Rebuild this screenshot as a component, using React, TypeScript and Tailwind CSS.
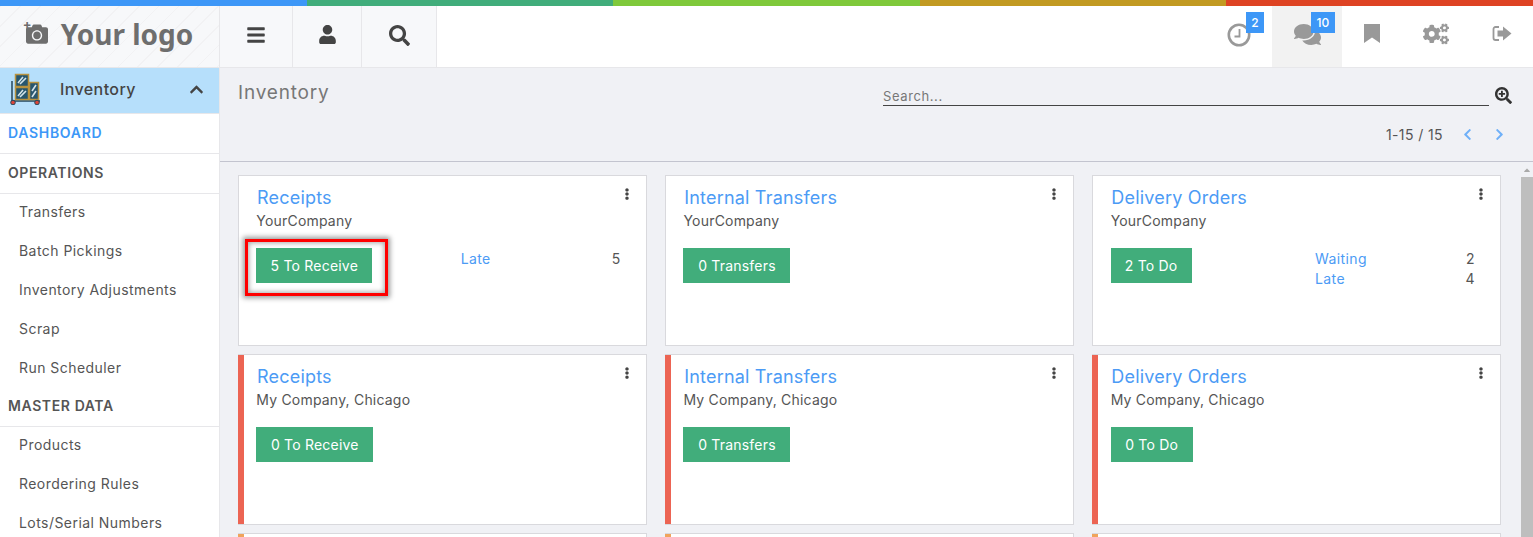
import React from "react";
import { FaBars, FaUser, FaSearch, FaComments, FaCogs, FaSearchPlus, FaChevronUp, FaChevronLeft, FaChevronRight, FaEllipsisV, FaCamera, FaCaretUp } from "react-icons/fa";

const operations = ["Transfers", "Batch Pickings", "Inventory Adjustments", "Scrap", "Run Scheduler"];
const masterData = ["Products", "Reordering Rules", "Lots/Serial Numbers"];

type Stat = { label: string; value: number };
type CardData = { title: string; company: string; action: string; width: string; accent?: string; stats?: Stat[] };

const cards: CardData[] = [
  { title: "Receipts", company: "YourCompany", action: "5 To Receive", width: "w-[116px]", stats: [{ label: "Late", value: 5 }] },
  { title: "Internal Transfers", company: "YourCompany", action: "0 Transfers", width: "w-[107px]" },
  { title: "Delivery Orders", company: "YourCompany", action: "2 To Do", width: "w-[81px]", stats: [{ label: "Waiting", value: 2 }, { label: "Late", value: 4 }] },
  { title: "Receipts", company: "My Company, Chicago", action: "0 To Receive", width: "w-[117px]", accent: "bg-[#ec6453]" },
  { title: "Internal Transfers", company: "My Company, Chicago", action: "0 Transfers", width: "w-[107px]", accent: "bg-[#ec6453]" },
  { title: "Delivery Orders", company: "My Company, Chicago", action: "0 To Do", width: "w-[82px]", accent: "bg-[#ec6453]" },
];

function InventoryIcon() {
  return (
    <svg width="33" height="32" viewBox="0 0 33 32">
      <path d="M3 8 L3 28 L31 28" fill="none" stroke="#24475c" strokeWidth="1.5" />
      <rect x="6.5" y="1.5" width="13" height="12" fill="#27566e" stroke="#b8923f" strokeWidth="1.5" />
      <rect x="6.5" y="14.5" width="13" height="12" fill="#27566e" stroke="#b8923f" strokeWidth="1.5" />
      <rect x="20.5" y="9.5" width="9" height="17" fill="#27566e" stroke="#b8923f" strokeWidth="1.5" />
      <path d="M9 10 L14 4 M11 11 L17 5 M9 23 L14 17 M11 24 L17 18 M23 18 L27 12 M23 24 L27 18" stroke="#d5e4ea" strokeWidth="1.6" />
      <circle cx="4" cy="29.5" r="2.3" fill="#d8453a" stroke="#24475c" />
      <circle cx="28" cy="29.5" r="2.3" fill="#d8453a" stroke="#24475c" />
    </svg>
  );
}

function Card({ card }: { card: CardData }) {
  return (
    <div className="relative h-[171px] border border-[#d9d9dd] bg-white">
      {card.accent && <div className={`absolute -left-px top-0 bottom-0 w-[6px] ${card.accent}`} />}
      <div className="flex h-[34px] items-start justify-between pl-[18px] pr-[13px] pt-[10px]">
        <div className="text-[18px] leading-[23px] text-[#4c9bf5]">{card.title}</div>
        <FaEllipsisV className="mt-[2px] text-[12px] text-[#444]" />
      </div>
      <div className="pl-[17.3px] text-[14px] leading-[22px] text-[#555]">{card.company}</div>
      <div className="flex items-start pl-[17.3px] pr-[25px] pt-[16px]">
        <div className={`flex h-[35px] items-center justify-center bg-[#41ad7b] text-[14px] text-white ${card.width}`}>{card.action}</div>
        {card.stats && (
          <div className="ml-auto mt-[1px] flex w-[160px] flex-col text-[14px] leading-[20px] tracking-[0.4px]">
            {card.stats.map((s) => (
              <div key={s.label} className="flex justify-between">
                <span className="text-[#4c9bf5]">{s.label}</span>
                <span className="text-[#555]">{s.value}</span>
              </div>
            ))}
          </div>
        )}
      </div>
    </div>
  );
}

export default function App() {
  return (
    <div className="flex h-[537px] flex-col overflow-hidden bg-white font-['Inter','Open_Sans',sans-serif] tracking-[0.2px] text-[#555]">
      <div className="flex h-[6px] shrink-0">
        <div className="flex-1 bg-[#3d97f7]" />
        <div className="flex-1 bg-[#41ad7b]" />
        <div className="flex-1 bg-[#7fc93b]" />
        <div className="flex-1 bg-[#c29a22]" />
        <div className="flex-1 bg-[#de4323]" />
      </div>

      <header className="flex h-[62px] shrink-0 border-b border-[#e7e7ea] bg-white">
        <div className="flex w-[220px] items-center justify-center gap-[13px] border-r border-[#e7e7ea] bg-[#f7f8fa] bg-[repeating-linear-gradient(135deg,#f2f2f4_0,#f2f2f4_1px,#f7f8fa_1px,#f7f8fa_14px)] pb-[5px]">
          <div className="relative">
            <FaCamera className="text-[22px] text-[#6e6e6e]" />
            <span className="absolute -left-[3px] -top-[8px] text-[13px] font-bold text-[#6e6e6e]">+</span>
          </div>
          <span className="font-['Noto_Sans',sans-serif] text-[28px] font-bold tracking-normal text-[#6e6e6e]">Your logo</span>
        </div>
        <div className="flex w-[73px] items-center justify-center border-r border-[#e7e7ea] bg-[#f7f8fa] pb-[4px]"><FaBars className="text-[20px] text-[#444]" /></div>
        <div className="flex w-[69px] items-center justify-center border-r border-[#e7e7ea] bg-[#f7f8fa] pb-[4px]"><FaUser className="text-[19px] text-[#444]" /></div>
        <div className="flex w-[75px] items-center justify-center border-r border-[#e7e7ea] bg-[#f7f8fa] pb-[3px]"><FaSearch className="text-[21px] text-[#444]" /></div>
        <div className="ml-auto flex h-full">
          <div className="relative flex w-[66px] items-center justify-center">
            <svg width="24" height="24" viewBox="0 0 24 24" className="mt-[-4px]">
              <circle cx="12" cy="12" r="10.2" fill="none" stroke="#999" strokeWidth="2.6" />
              <path d="M12.5 6 V13.5 H7.5" fill="none" stroke="#999" strokeWidth="1.8" />
            </svg>
            <span className="absolute left-[40px] top-[6px] flex h-[21px] w-[18px] items-center justify-center bg-[#3d97f7] text-[12px] font-medium text-white">2</span>
          </div>
          <div className="relative flex w-[70px] items-center justify-center bg-[#f2f2f2]">
            <FaComments className="mt-[-4px] text-[27px] text-[#999]" />
            <span className="absolute left-[39px] top-[6px] flex h-[21px] w-[24px] items-center justify-center bg-[#3d97f7] text-[12px] font-medium text-white">10</span>
          </div>
          <div className="flex w-[60px] items-center justify-center">
            <svg width="16" height="19" viewBox="0 0 16 19" className="mt-[-6px]">
              <path d="M0 0 H16 V19 L8 13.5 L0 19 Z" fill="#999" />
            </svg>
          </div>
          <div className="flex w-[68px] items-center justify-center"><FaCogs className="mt-[-6px] text-[26px] text-[#999]" /></div>
          <div className="flex w-[63px] items-center justify-center">
            <svg width="20" height="18" viewBox="0 0 20 18" className="mt-[-6px]">
              <path d="M7 2 H3.5 A2 2 0 0 0 1.5 4 V13 A2 2 0 0 0 3.5 15 H7" fill="none" stroke="#999" strokeWidth="1.8" />
              <path d="M5.5 5.5 H11 V1.5 L19.5 8.5 L11 15.5 V11.5 H5.5 Z" fill="#999" />
            </svg>
          </div>
        </div>
      </header>

      <div className="flex min-h-0 flex-1">
        <aside className="w-[220px] shrink-0 overflow-hidden border-r border-[#e7e7ea] bg-white">
          <div className="flex h-[46px] items-center border-b border-[#e7e7ea] bg-[#b6dffb] pb-[3px] pl-[9px] pr-[15px]">
            <InventoryIcon />
            <span className="ml-[18px] text-[16px] font-medium tracking-[0.4px] text-[#444]">Inventory</span>
            <FaChevronUp className="ml-auto text-[15px] text-[#444]" />
          </div>
          <div className="flex h-[40px] items-center border-b border-[#e7e7ea] pb-[2px] pl-[8px] text-[14px] font-semibold tracking-[0.7px] text-[#3d97f7]">DASHBOARD</div>
          <div className="flex h-[40px] items-center border-b border-[#e7e7ea] pb-[2px] pl-[8px] text-[14px] font-semibold tracking-[0.6px] text-[#555]">OPERATIONS</div>
          <div className="-mt-[1px]">
            {operations.map((item) => (
              <div key={item} className="flex h-[39px] items-center pb-[2px] pl-[19px] text-[14px] tracking-[0.45px] text-[#555]">{item}</div>
            ))}
          </div>
          <div className="flex h-[39px] items-center border-b border-[#e7e7ea] pb-[4px] pl-[8px] text-[14px] font-semibold tracking-[0.6px] text-[#555]">MASTER DATA</div>
          <div className="-mt-[1px]">
            {masterData.map((item) => (
              <div key={item} className="flex h-[39px] items-center pb-[2px] pl-[19px] text-[14px] tracking-[0.45px] text-[#555]">{item}</div>
            ))}
          </div>
        </aside>

        <main className="flex min-w-0 flex-1 flex-col bg-[#f0f1f5]">
          <div className="h-[94px] shrink-0 border-b border-[#c3c4cf] pl-[18px] pr-[21px]">
            <div className="flex items-start pt-[13px]">
              <h1 className="text-[19px] leading-[24px] font-normal tracking-[0.8px] text-[#777]">Inventory</h1>
              <div className="ml-auto flex items-start">
                <div className="mt-[6px] h-[19px] w-[606px] border-b border-[#444] text-[13px] leading-[18px] tracking-[0.6px] text-[#777]">Search...</div>
                <FaSearchPlus className="ml-[6px] mt-[6px] text-[17px] text-[#333]" />
              </div>
            </div>
            <div className="mt-[18px] flex items-center justify-end text-[14px] tracking-[0.4px] text-[#555]">
              <span>1-15 / 15</span>
              <FaChevronLeft className="ml-[18px] text-[13px] text-[#6fb0f8]" />
              <FaChevronRight className="ml-[19px] mr-[6px] text-[13px] text-[#6fb0f8]" />
            </div>
          </div>

          <div className="flex min-h-0 flex-1">
            <div className="relative min-w-0 flex-1 overflow-hidden">
              <div className="grid grid-cols-3 gap-x-[18.5px] gap-y-[8px] pl-[18px] pr-[20px] pt-[13px]">
                {cards.map((c, i) => (
                  <Card key={i} card={c} />
                ))}
                {[0, 1, 2].map((i) => (
                  <div key={i} className="relative h-[171px] border border-[#d9d9dd] bg-white">
                    <div className="absolute -left-px top-0 bottom-0 w-[6px] bg-[#f0a45c]" />
                  </div>
                ))}
              </div>
              <div className="absolute left-[25px] top-[77px] h-[57px] w-[143px] border-[3px] border-[#ff0000] shadow-[0_0_5px_2px_rgba(0,0,0,0.4),inset_0_0_5px_1px_rgba(0,0,0,0.35)]" />
            </div>
            <div className="flex w-[12px] shrink-0 flex-col items-center">
              <FaCaretUp className="mt-[3px] h-[10px] text-[12px] text-[#a9a9a9]" />
              <div className="mt-[2px] w-full flex-1 bg-[#bebebe]" />
            </div>
          </div>
        </main>
      </div>
    </div>
  );
}
